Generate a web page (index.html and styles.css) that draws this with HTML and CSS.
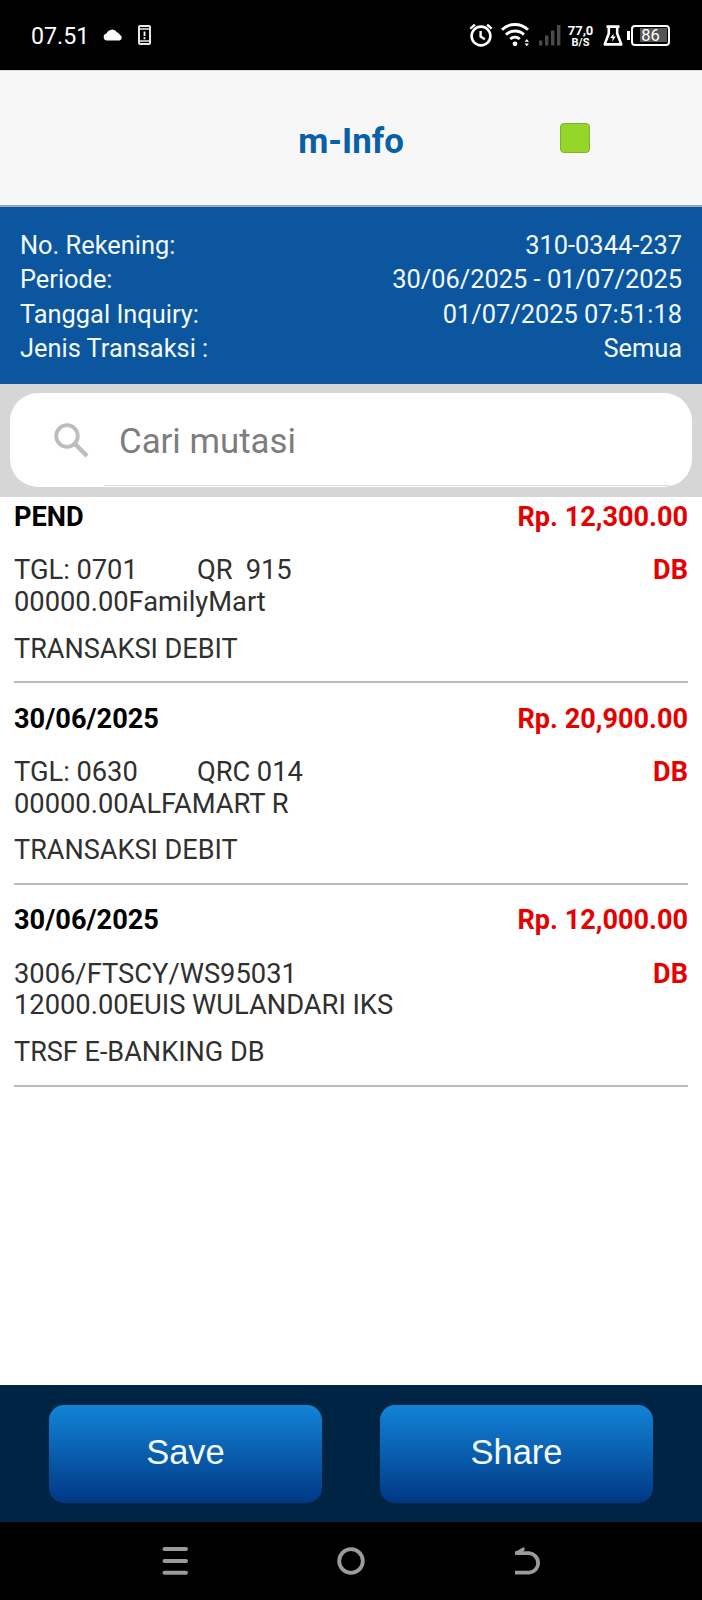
FILE: index.html
```
<!DOCTYPE html>
<html lang="id">
<head>
    <meta charset="UTF-8">
    <meta name="viewport" content="width=device-width, initial-scale=1.0">
    <title>m-Info</title>
    <link rel="stylesheet" href="styles.css">
</head>
<body>

<div class="status-bar">
    <div class="status-left">
        <span class="clock">07.51</span>
        <svg class="icon-cloud" width="20" height="12" viewBox="0 0 20 12">
            <path d="M4 11.5a3.6 3.6 0 0 1-.5-7.1A6 6 0 0 1 14 3.2a4.2 4.2 0 0 1 2.8 2.6 3 3 0 0 1-.3 5.7z" fill="#fff"/>
        </svg>
        <svg class="icon-phone" width="13" height="20" viewBox="0 0 13 20">
            <rect x="1" y="1" width="11" height="18" rx="1" fill="none" stroke="#e8e8e8" stroke-width="2"/>
            <path d="M1 4h11M1 16h11" stroke="#e8e8e8" stroke-width="1.6"/>
            <path d="M6.5 6.5v4.5M6.5 12.3v2" stroke="#fff" stroke-width="1.8"/>
        </svg>
    </div>
    <div class="status-right">
        <svg class="icon-alarm" width="24" height="24" viewBox="0 0 24 24" fill="none" stroke="#fff">
            <circle cx="12" cy="13" r="9.4" stroke-width="2.6"/>
            <path d="M11.6 8v5.6l4.2 2.6" stroke-width="2.4"/>
            <path d="M1.3 5.6l4.6-4M22.7 5.6l-4.6-4" stroke-width="2.4"/>
        </svg>
        <svg class="icon-wifi" width="28" height="24" viewBox="0 0 28 24" fill="none" stroke="#fff" stroke-width="2.9">
            <path d="M1 6.8a18.5 18.5 0 0 1 26 0M5 11.6a13 13 0 0 1 18 0M9.2 16a7.4 7.4 0 0 1 9.6 0"/>
            <circle cx="14" cy="20.8" r="2.4" fill="#fff" stroke="none"/>
            <path d="M23.6 18.8l2.2-2.8 2.2 2.8zM23.6 20.4l2.2 2.8 2.2-2.8z" fill="#fff" stroke="none"/>
        </svg>
        <svg class="icon-signal" width="22" height="22" viewBox="0 0 22 22" fill="#4a4a4a">
            <rect x="0" y="16.5" width="3.4" height="5"/>
            <rect x="6" y="11.5" width="3.4" height="10"/>
            <rect x="12" y="6.5" width="3.4" height="15"/>
            <rect x="18" y="1" width="3.4" height="20.5"/>
        </svg>
        <div class="net-speed">
            <span class="speed">77,0</span>
            <span class="unit">B/S</span>
        </div>
        <svg class="icon-flask" width="20" height="21" viewBox="0 0 20 21">
            <path d="M3.5 1.6h13M5.8 2v6.5L1.7 19.4h16.6L14.2 8.5V2" fill="none" stroke="#fff" stroke-width="2.6" stroke-linejoin="round"/>
            <path d="M10.6 8.5l-3.4 4.5h2.4l-.4 3.4 3.6-4.8h-2.4z" fill="#fff"/>
        </svg>
        <div class="battery"><span>86</span></div>
    </div>
</div>

<div class="header">
    <h1>m-Info</h1>
    <div class="indicator"></div>
</div>

<div class="info">
    <div class="info-row"><span>No. Rekening:</span><span>310-0344-237</span></div>
    <div class="info-row"><span>Periode:</span><span>30/06/2025 - 01/07/2025</span></div>
    <div class="info-row"><span>Tanggal Inquiry:</span><span>01/07/2025 07:51:18</span></div>
    <div class="info-row"><span>Jenis Transaksi :</span><span>Semua</span></div>
</div>

<div class="search">
    <div class="search-box">
        <svg class="icon-search" width="35" height="35" viewBox="0 0 35 35" fill="none" stroke="#bdbdbd">
            <circle cx="13" cy="13" r="10.8" stroke-width="3.8"/>
            <path d="M21 21l12 12" stroke-width="4.4"/>
        </svg>
        <div class="search-text">Cari mutasi</div>
    </div>
</div>

<div class="list">
    <div class="item">
        <div class="row head"><span>PEND</span><span class="red">Rp. 12,300.00</span></div>
        <div class="row detail">
            <p>TGL: 0701         QR  915<br>00000.00FamilyMart</p>
            <span class="red">DB</span>
        </div>
        <p class="type">TRANSAKSI DEBIT</p>
    </div>
    <div class="item">
        <div class="row head"><span>30/06/2025</span><span class="red">Rp. 20,900.00</span></div>
        <div class="row detail">
            <p>TGL: 0630         QRC 014<br>00000.00ALFAMART R</p>
            <span class="red">DB</span>
        </div>
        <p class="type">TRANSAKSI DEBIT</p>
    </div>
    <div class="item">
        <div class="row head"><span>30/06/2025</span><span class="red">Rp. 12,000.00</span></div>
        <div class="row detail">
            <p>3006/FTSCY/WS95031<br>12000.00EUIS WULANDARI IKS</p>
            <span class="red">DB</span>
        </div>
        <p class="type">TRSF E-BANKING DB</p>
    </div>
</div>

<div class="actions">
    <button>Save</button>
    <button>Share</button>
</div>

<div class="nav-bar">
    <svg width="28" height="30" viewBox="0 0 28 30" stroke="#9b9b9b" stroke-width="4" stroke-linecap="round">
        <path d="M3.5 3h21.5M3.5 15h21.5M3.5 26.7h21.5"/>
    </svg>
    <svg width="28" height="30" viewBox="0 0 28 30" fill="none" stroke="#9b9b9b" stroke-width="3.8">
        <circle cx="14" cy="15" r="11.8"/>
    </svg>
    <svg width="28" height="30" viewBox="0 0 28 30" fill="none" stroke="#9b9b9b" stroke-width="3.8">
        <path d="M2 7.2h14.3a9.8 9.8 0 0 1 0 19.5H2"/>
        <path d="M2 6L10.8 1l1.2 2.6-3.8 3.6z" fill="#9b9b9b" stroke="none"/>
    </svg>
</div>

</body>
</html>
```

FILE: styles.css
```
* {
    box-sizing: border-box;
}
body {
    margin: 0;
    height: 1600px;
    display: flex;
    flex-direction: column;
    font-family: Roboto, sans-serif;
    background-color: #fff;
}
h1, p {
    margin: 0;
}
svg {
    display: block;
    flex: none;
}

.status-bar {
    height: 70px;
    flex: none;
    display: flex;
    justify-content: space-between;
    align-items: center;
    padding: 0 32px 0 31px;
    background-color: #000;
    color: #fff;
}
.status-left, .status-right {
    display: flex;
    align-items: center;
}
.clock {
    width: 72px;
    font-size: 23.2px;
    line-height: 28px;
    padding-top: 2px;
}
.icon-phone {
    margin-left: 15px;
}
.icon-wifi {
    margin-left: 8px;
}
.icon-signal {
    margin-left: 10px;
}
.net-speed {
    width: 25px;
    margin: 3px 10px 0 7px;
    display: flex;
    flex-direction: column;
    align-items: center;
    font-weight: 700;
}
.speed {
    font-size: 13px;
    line-height: 12px;
}
.unit {
    font-size: 11px;
    line-height: 12px;
}
.battery {
    width: 43px;
    height: 21px;
    margin-left: 4px;
    padding-left: 4px;
    display: flex;
    align-items: center;
    background: linear-gradient(#fff, #fff) 0 50% / 3px 9px no-repeat;
}
.battery span {
    width: 39px;
    height: 21px;
    border: 2px solid #fff;
    border-radius: 4px;
    text-align: center;
    font-size: 16.5px;
    line-height: 18px;
    background: linear-gradient(#555, #555) 7px 1.5px / 27px 14px no-repeat;
}

.header {
    position: relative;
    height: 137px;
    flex: none;
    display: flex;
    justify-content: center;
    background-color: #f7f7f7;
    border-top: 1px solid #ddd;
    border-bottom: 2px solid #94a9bd;
}
.header h1 {
    padding-top: 50px;
    font-size: 34.8px;
    line-height: 40px;
    font-weight: 700;
    color: #0860a8;
}
.indicator {
    position: absolute;
    top: 52px;
    left: 560px;
    width: 30px;
    height: 30px;
    border: 1px solid #7fb52a;
    border-radius: 4px;
    background-color: #96d629;
}

.info {
    height: 177px;
    flex: none;
    padding: 21px 20px 0;
    background-color: #0c569f;
    color: #f2fafd;
    font-size: 25.4px;
}
.info-row {
    display: flex;
    justify-content: space-between;
    line-height: 34.4px;
}

.search {
    height: 113px;
    flex: none;
    padding: 9px 10px 10px;
    background-color: #d6d6d6;
}
.search-box {
    height: 94px;
    display: flex;
    padding: 0 22px 1px 44px;
    border-radius: 28px;
    background-color: #fff;
}
.icon-search {
    margin-top: 30px;
}
.search-text {
    flex: 1;
    margin-left: 15px;
    padding: 28px 0 0 15px;
    font-size: 34.8px;
    line-height: 40px;
    color: #7d7d7d;
    border-bottom: 1px solid #dcdcdc;
}

.list {
    flex: 1;
    display: flex;
    flex-direction: column;
    gap: 19.5px;
    padding: 4px 14px 0;
    font-size: 27.3px;
    line-height: 31.7px;
    color: #303030;
}
.item {
    padding-bottom: 15.8px;
    border-bottom: 2px solid #bcbcbc;
}
.row {
    display: flex;
    justify-content: space-between;
}
.head {
    margin-bottom: 22.3px;
    font-size: 27.2px;
    line-height: 32px;
    font-weight: 700;
    color: #000;
}
.detail p {
    white-space: pre;
    word-spacing: -0.2px;
}
.red {
    font-size: 27.1px;
    font-weight: 700;
    color: #e60000;
}
.type {
    margin-top: 15px;
    font-size: 27.05px;
}

.actions {
    height: 137px;
    flex: none;
    display: flex;
    justify-content: space-between;
    padding: 20px 49px 0;
    background-color: #002444;
}
.actions button {
    width: 273px;
    height: 98px;
    padding: 0 0 4px;
    border: none;
    border-radius: 15px;
    background: linear-gradient(#1284d8, #003784);
    color: #f4faff;
    font-family: "Liberation Sans", Arial, sans-serif;
    font-size: 34.5px;
}

.nav-bar {
    height: 78px;
    flex: none;
    display: flex;
    justify-content: space-between;
    padding: 24px 161px 0;
    background-color: #000;
}
```
